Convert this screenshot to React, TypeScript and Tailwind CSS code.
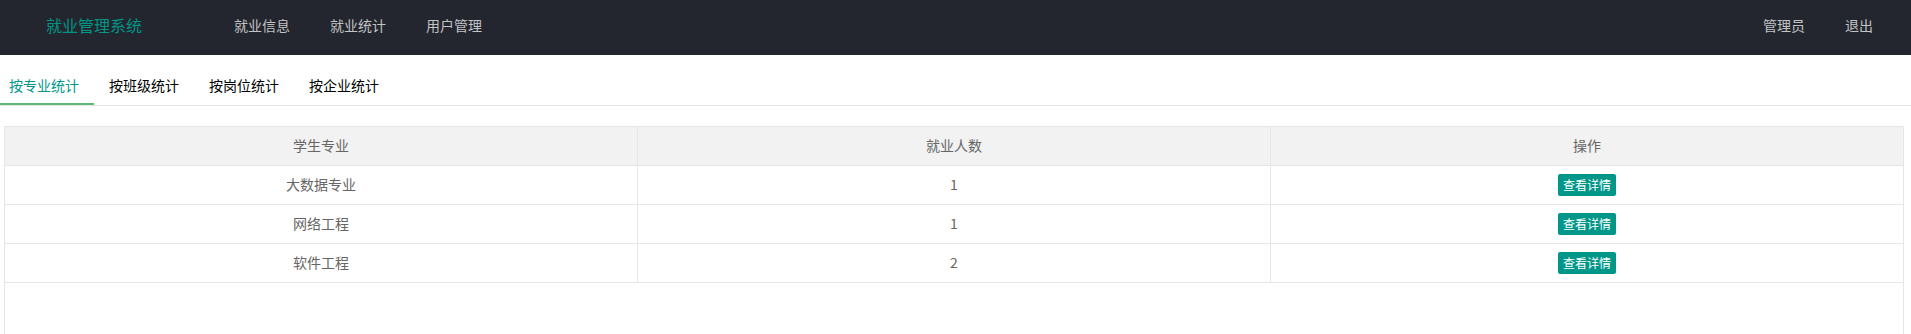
const navLeft = ['就业信息', '就业统计', '用户管理']
const navRight = ['管理员', '退出']
const tabs = ['按专业统计', '按班级统计', '按岗位统计', '按企业统计']

const rows = [
  { major: '大数据专业', count: 1 },
  { major: '网络工程', count: 1 },
  { major: '软件工程', count: 2 },
]

export default function App() {
  return (
    <main className="min-h-screen bg-white text-[14px] font-['Noto_Sans_CJK_SC','Microsoft_YaHei',sans-serif]">

      {/* Top bar */}
      <header className="h-[55px] bg-[#23262e] flex items-start">
        <div className="pl-[46px] leading-[51px] text-[16px] text-[#009688]">就业管理系统</div>
        <nav className="ml-[72px] flex">
          {navLeft.map(item => (
            <a key={item} className="px-[20px] leading-[51px] text-[#c2c3c5] cursor-pointer">{item}</a>
          ))}
        </nav>
        <nav className="ml-auto pr-[18px] flex">
          {navRight.map(item => (
            <a key={item} className="px-[20px] leading-[51px] text-[#c2c3c5] cursor-pointer">{item}</a>
          ))}
        </nav>
      </header>

      {/* Tabs */}
      <ul className="mt-[10px] -ml-[6px] h-[41px] flex border-b border-[#e6e6e6]">
        {tabs.map((t, i) => (
          <li
            key={t}
            className={`relative h-[40px] leading-[40px] px-[15px] min-w-[65px] text-center cursor-pointer ${i === 0 ? 'text-[#009688]' : 'text-black'}`}
          >
            {t}
            {i === 0 && <span className="absolute left-0 right-0 bottom-0 h-[2px] bg-[#5fb878]" />}
          </li>
        ))}
      </ul>

      {/* Table */}
      <div className="mt-[20px] ml-[4px] mr-[7px] h-[240px] border border-[#e6e6e6]">
        <table className="w-full table-fixed border-collapse text-[#666]">
          <thead>
            <tr className="bg-[#f2f2f2]">
              {['学生专业', '就业人数', '操作'].map((h, i) => (
                <th
                  key={h}
                  className={`h-[38px] p-0 font-normal text-center border-b border-[#e6e6e6] ${i < 2 ? 'border-r' : ''}`}
                >
                  {h}
                </th>
              ))}
            </tr>
          </thead>
          <tbody>
            {rows.map(r => (
              <tr key={r.major}>
                <td className="h-[39px] p-0 text-center border-b border-r border-[#e6e6e6]">{r.major}</td>
                <td className="h-[39px] p-0 text-center border-b border-r border-[#e6e6e6]">{r.count}</td>
                <td className="h-[39px] p-0 text-center border-b border-[#e6e6e6]">
                  <span className="inline-block h-[22px] leading-[22px] px-[5px] text-[12px] text-white bg-[#009688] rounded-[2px] cursor-pointer">
                    查看详情
                  </span>
                </td>
              </tr>
            ))}
          </tbody>
        </table>
      </div>

    </main>
  )
}
